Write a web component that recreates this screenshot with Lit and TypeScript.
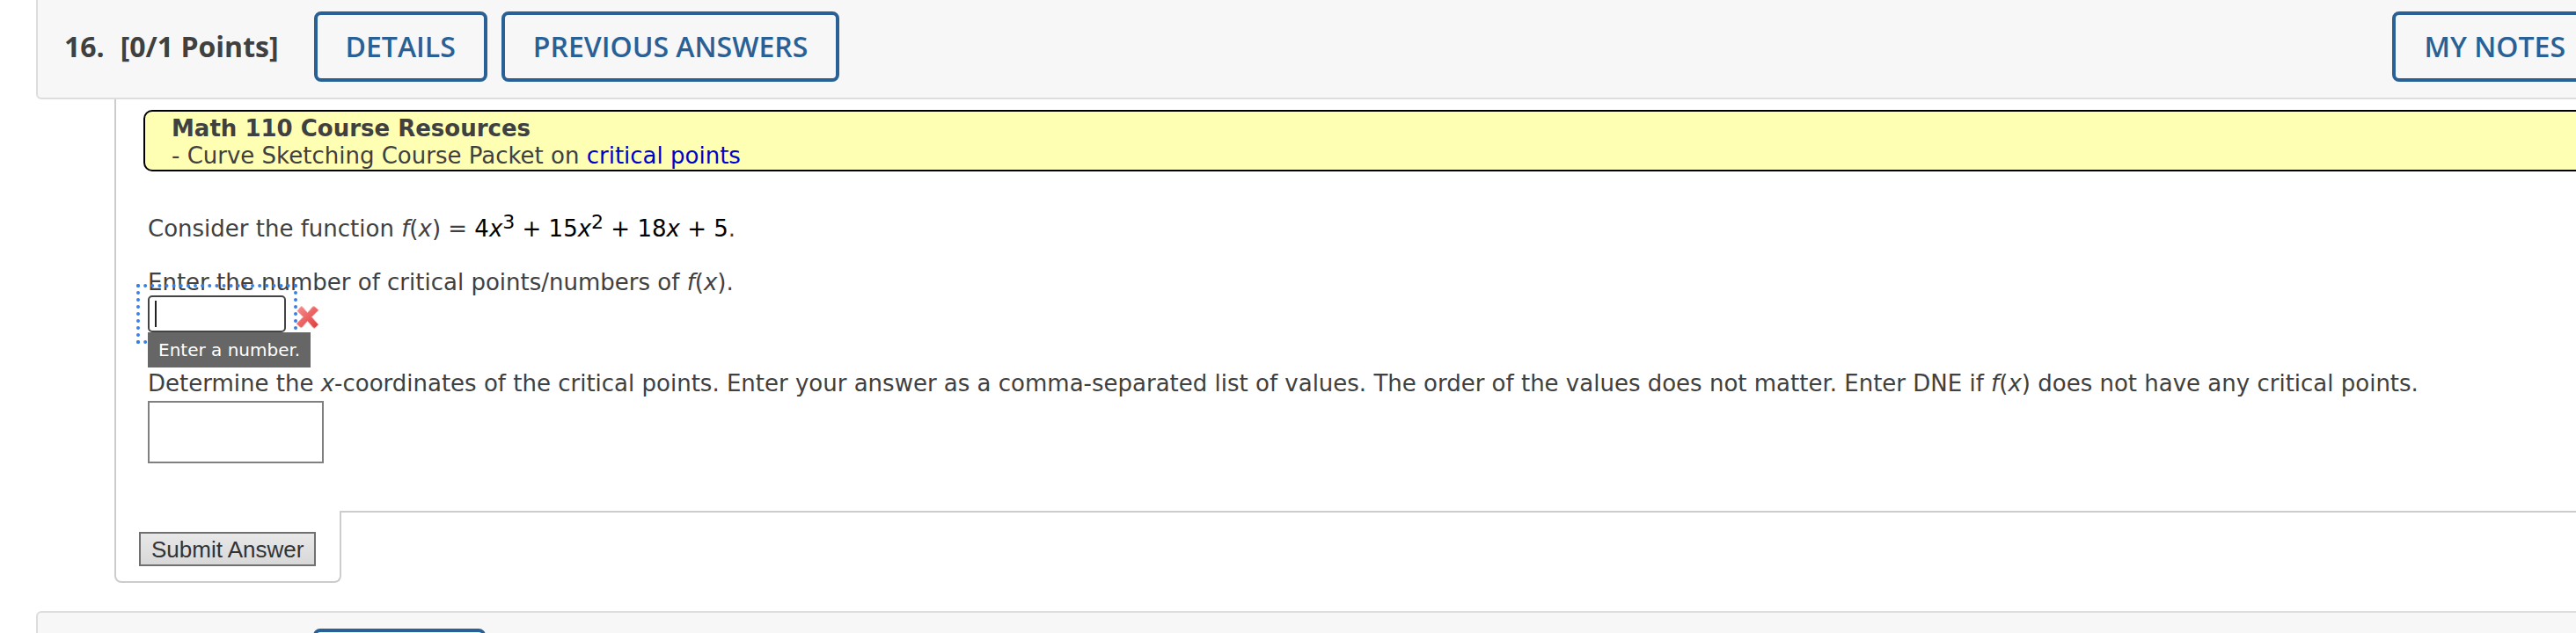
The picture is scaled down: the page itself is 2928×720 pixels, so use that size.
import { LitElement, html, css } from "lit";
import { customElement } from "lit/decorators.js";

const fx = html`<i>f</i>(<i>x</i>)`;

@customElement("app-root")
export class AppRoot extends LitElement {
  static styles = css`
    :host {
      display: block;
      height: 100vh;
      overflow: hidden;
      background: #fff;
      color: #404040;
      font: 26px/30px "DejaVu Sans", Verdana, sans-serif;
    }
    * { box-sizing: border-box; }
    .bar {
      display: flex;
      align-items: center;
      gap: 16px;
      margin: 0 -58px 0 41px;
      padding: 18px 32px 18px 30px;
      border: 2px solid #ddd;
      border-radius: 6px;
      background: #f7f7f7;
      font-family: "Open Sans", sans-serif;
    }
    .bar.current {
      border-top: 0;
      border-radius: 0 0 6px 6px;
      padding-top: 13px;
    }
    .bar.next { padding-left: 313px; }
    .heading {
      display: flex;
      gap: 18px;
      margin: 0 24px 0 0;
      font-size: 32px;
      line-height: 36px;
      font-weight: 700;
    }
    .action {
      flex: none;
      min-width: 196px;
      height: 80px;
      padding: 0 32px;
      border: 4px solid #296196;
      border-radius: 8px;
      background: transparent;
      color: #296196;
      font: 600 32px/40px "Open Sans", sans-serif;
    }
    .notes { margin-left: auto; }
    .question {
      margin-left: 130px;
      padding: 12px 0 54px 36px;
      border-left: 2px solid #ccc;
    }
    .resources {
      margin: 0 -32px 50px -5px;
      padding: 4px 30px 0;
      border: 2px solid #000;
      border-radius: 10px;
      background: #ffffb3;
      line-height: 31px;
    }
    .resources p, .question h2 { margin: 0; }
    .question h2 { font-size: inherit; }
    a { color: #0000cc; text-decoration: none; }
    .statement { margin: 0 0 31px; }
    .math { color: #000; }
    sup { font-size: 22px; line-height: 0; vertical-align: 9px; }
    .prompt { display: block; }
    .answer {
      display: flex;
      align-items: center;
      height: 42px;
      margin-bottom: 43px;
    }
    .field {
      position: relative;
      width: 157px;
      height: 42px;
      outline: 4px dotted #3880e4;
      outline-offset: 9px;
    }
    .number {
      display: block;
      width: 100%;
      height: 100%;
      border: 2px solid #444;
      border-radius: 5px;
      background: #fff;
      font: inherit;
      outline: none;
    }
    .caret {
      position: absolute;
      left: 8px;
      top: 6px;
      width: 2px;
      height: 30px;
      background: #222;
    }
    .tip {
      position: absolute;
      z-index: 1;
      left: 0;
      top: 42px;
      padding: 5px 12px;
      background: #666;
      color: #fff;
      font-size: 20px;
      white-space: nowrap;
    }
    .wrong { display: block; margin: 7px 0 0 11px; }
    .list {
      display: block;
      width: 200px;
      height: 71px;
      margin-top: 5px;
      border: 2px solid #808080;
      background: #fff;
      font: inherit;
    }
    .foot {
      display: flex;
      margin: 0 0 32px 130px;
    }
    .tab {
      padding: 24px 27px 17px 26px;
      border: solid #ccc;
      border-width: 0 2px 2px;
      border-radius: 0 0 8px 8px;
    }
    .rule { flex: 1; border-top: 2px solid #ccc; }
    .submit {
      display: block;
      height: 39px;
      padding: 0 12px;
      border: 2px solid #707070;
      background: linear-gradient(#e8e8e8, #d8d8d8);
      color: #333;
      font: 26px/30px "Liberation Sans", Arial, sans-serif;
    }
  `;

  render() {
    return html`
      <header class="bar current">
        <h1 class="heading"><span>16.</span><span>[0/1 Points]</span></h1>
        <button class="action">DETAILS</button>
        <button class="action">PREVIOUS ANSWERS</button>
        <button class="action notes">MY NOTES</button>
      </header>
      <main>
        <section class="question">
          <div class="resources">
            <h2>Math 110 Course Resources</h2>
            <p>- Curve Sketching Course Packet on <a href="#">critical points</a></p>
          </div>
          <p class="statement">Consider the function ${fx} = <span class="math">4<i>x</i><sup>3</sup> + 15<i>x</i><sup>2</sup> + 18<i>x</i> + 5</span>.</p>
          <label class="prompt" for="count">Enter the number of critical points/numbers of ${fx}.</label>
          <div class="answer">
            <div class="field">
              <input class="number" id="count" type="text" aria-describedby="tip" />
              <span class="caret"></span>
              <span class="tip" id="tip" role="tooltip">Enter a number.</span>
            </div>
            <svg class="wrong" width="27" height="27" viewBox="0 0 28 28" role="img" aria-label="Incorrect">
              <defs>
                <linearGradient id="red" x1="0" y1="0" x2="1" y2="1">
                  <stop offset="0" stop-color="#f59090" />
                  <stop offset="0.5" stop-color="#ec6464" />
                  <stop offset="1" stop-color="#d83c38" />
                </linearGradient>
              </defs>
              <path d="M2 7 6 2Q7 1 9 3L14 9 20 2Q22 1 24 3L27 6 19 14 27 23 23 27Q22 28 20 26L14 19 8 26Q7 27 5 26L1 22 9 14Z" fill="url(#red)" stroke="#f8b4b4" stroke-width="1" stroke-linejoin="round" />
            </svg>
          </div>
          <label class="prompt" for="coords">Determine the <i>x</i>-coordinates of the critical points. Enter your answer as a comma-separated list of values. The order of the values does not matter. Enter DNE if ${fx} does not have any critical points.</label>
          <input class="list" id="coords" type="text" />
        </section>
        <div class="foot">
          <div class="tab"><button class="submit">Submit Answer</button></div>
          <div class="rule"></div>
        </div>
      </main>
      <section class="bar next">
        <button class="action" aria-label="Details"></button>
      </section>
    `;
  }
}
